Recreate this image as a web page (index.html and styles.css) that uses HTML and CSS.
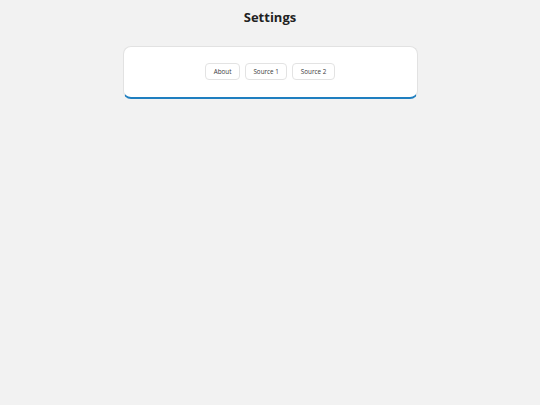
FILE: index.html
```html
<!DOCTYPE html>
<html>
<head>
<meta charset="utf-8">
<link rel="stylesheet" href="styles.css">
</head>
<body>
<div class="page">
  <h1 class="title">Settings</h1>
  <div class="card">
    <div class="tabs">
      <button class="tab">About</button>
      <button class="tab">Source 1</button>
      <button class="tab">Source 2</button>
    </div>
  </div>
</div>
</body>
</html>
```
FILE: styles.css
```css
html, body {
  margin: 0;
  padding: 0;
  background: #f2f2f2;
  font-family: "Open Sans", "Noto Sans", sans-serif;
}
.page {
  display: flex;
  flex-direction: column;
  align-items: center;
  padding-top: 8px;
}
.title {
  margin: 0;
  font-size: 13px;
  font-weight: 700;
  color: #222;
  line-height: 18px;
}
.card {
  box-sizing: border-box;
  margin-top: 20px;
  width: 295px;
  height: 53px;
  background: #fff;
  border: 1px solid #e2e2e2;
  border-bottom: 2px solid #1f7fc0;
  border-radius: 8px;
  display: flex;
  align-items: flex-start;
  justify-content: center;
  padding-top: 16px;
}
.tabs {
  display: flex;
  gap: 5px;
}
.tab {
  box-sizing: border-box;
  height: 17px;
  padding: 0 7.5px;
  background: #fff;
  border: 1px solid #e3e3e3;
  border-radius: 4px;
  font-family: "Open Sans", "Noto Sans", sans-serif;
  font-size: 6.3px;
  color: #3a3a3a;
  line-height: 15px;
}
```
